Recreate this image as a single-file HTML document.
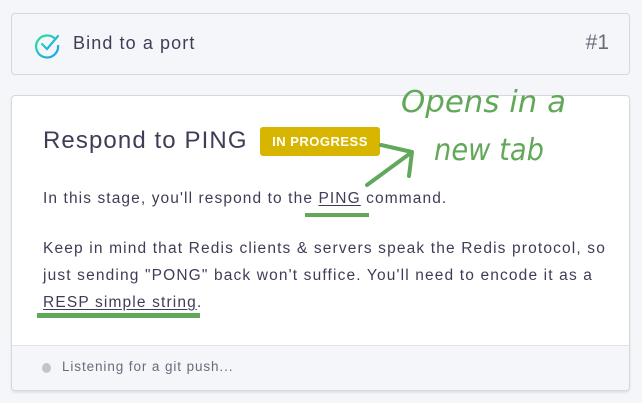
<!DOCTYPE html>
<html><head><style>
body{margin:0;width:642px;height:403px;background:#f5f6fa;font-family:"Liberation Sans",sans-serif;position:relative;overflow:hidden;color:#3f3d56}
.c1{position:absolute;left:11px;top:13px;width:617px;height:60px;border:1px solid #d6d8de;border-radius:4px;background:#f5f6fa}
.c2{position:absolute;left:11px;top:95px;width:617px;height:294px;border:1px solid #d6d8de;border-radius:4px;background:#fff;box-shadow:0 2px 2px rgba(0,0,0,.08);overflow:hidden}
.foot{position:absolute;left:0;right:0;bottom:0;height:44px;background:#f5f6fa;border-top:1px solid #e0e2e7}
.t{position:absolute;white-space:nowrap}
u{text-decoration:underline;text-underline-offset:2px}
.g{position:absolute;background:#62a85a;height:4px}
</style></head><body>
<div class="c1">
<svg style="position:absolute;left:22px;top:17px" width="28" height="28" viewBox="0 0 28 28"><defs><linearGradient id="gr" x1="0" y1="0" x2="1" y2="1"><stop offset="0" stop-color="#2ee0a0"/><stop offset="1" stop-color="#1aa0f0"/></linearGradient></defs><path d="M22 9A11 11 0 1 0 24 14" fill="none" stroke="url(#gr)" stroke-width="2.2"/><path d="M8 13l5 5 11-13" fill="none" stroke="url(#gr)" stroke-width="2.2" stroke-linecap="round"/></svg>
<div class="t" style="left:61px;top:19px;font-size:18px;letter-spacing:1.1px;color:#3f3d56">Bind to a port</div>
<div class="t" style="right:20px;top:17px;font-size:21px;color:#6b6b7b">#1</div>
</div>
<div class="c2">
<div class="t" style="left:31px;top:31px;font-size:24px;letter-spacing:1.1px;color:#3f3d56">Respond to PING</div>
<div class="t" style="left:248px;top:31px;width:120px;height:29px;background:#d8b600;border-radius:3px;color:#fff;font-weight:bold;font-size:13px;letter-spacing:0.5px;line-height:29px;text-align:center">IN PROGRESS</div>
<div class="t" style="left:31px;top:94px;font-size:15.5px;letter-spacing:1.1px;color:#3f3d56">In this stage, you'll respond to the <u>PING</u> command.</div>
<div class="t" style="left:31px;top:139px;font-size:15.5px;letter-spacing:1.15px;line-height:27px;color:#3f3d56">Keep in mind that Redis clients &amp; servers speak the Redis protocol, so<br>just sending "PONG" back won't suffice. You'll need to encode it as a<br><u>RESP simple string</u>.</div>
<div class="foot"><div class="t" style="left:30px;top:17px;width:9px;height:10px;border-radius:50%;background:#c4c4c8"></div><div class="t" style="left:50px;top:13px;font-size:13.5px;letter-spacing:0.9px;color:#6b6b7b">Listening for a git push...</div></div>
</div>
<div class="g" style="left:305px;top:213px;width:64px"></div>
<div class="g" style="left:37px;top:313px;width:163px;height:5px"></div>
<svg style="position:absolute;left:0;top:0" width="642" height="403">
<path d="M381 145L412 152M412 152L409 176M412 152L367 185" fill="none" stroke="#62a85a" stroke-width="4" stroke-linecap="round"/>
<text x="401" y="112" font-family="DejaVu Sans" font-style="italic" font-size="30" fill="#62a85a" textLength="165" lengthAdjust="spacingAndGlyphs">Opens in a</text>
<text x="434" y="160" font-family="DejaVu Sans" font-style="italic" font-size="30" fill="#62a85a" textLength="110" lengthAdjust="spacingAndGlyphs">new tab</text>
</svg>
</body></html>
